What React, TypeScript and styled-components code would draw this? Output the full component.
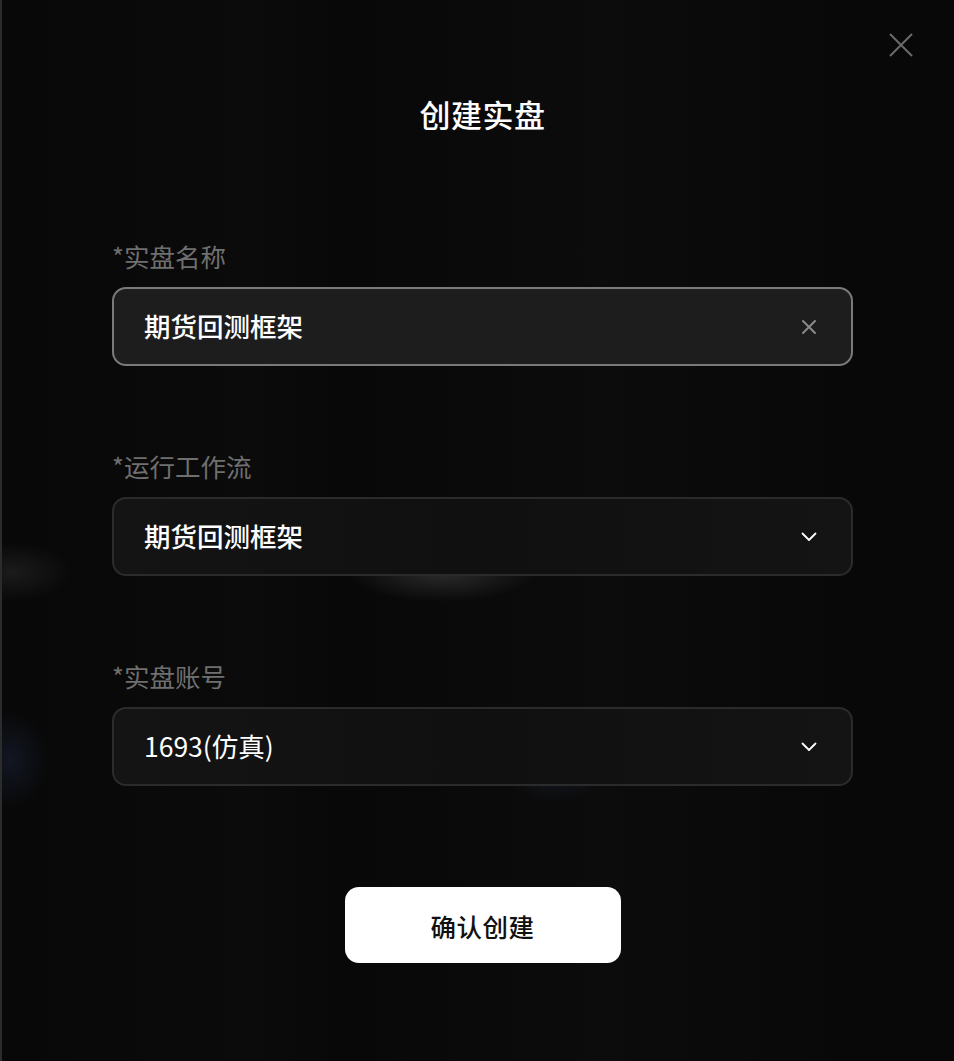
import React from "react";
import styled, { createGlobalStyle } from "styled-components";

const Global = createGlobalStyle`
  html, body { margin: 0; padding: 0; background: #080808; }
  body { font-family: "Noto Sans CJK SC", "Noto Sans", sans-serif; }
  * { box-sizing: border-box; }
`;

const Page = styled.div`
  position: relative;
  min-height: 1061px;
  width: 954px;
  overflow: hidden;
  border-left: 2px solid #2c2c2c;
  background-color: #080808;
  background-image:
    radial-gradient(ellipse 95px 30px at 440px 572px, rgba(255,255,255,0.14), rgba(255,255,255,0) 100%),
    radial-gradient(ellipse 60px 30px at 10px 572px, rgba(255,255,255,0.08), rgba(255,255,255,0) 100%),
    radial-gradient(ellipse 55px 40px at 552px 762px, rgba(70,90,150,0.22), rgba(70,90,150,0) 100%),
    radial-gradient(ellipse 40px 50px at 8px 760px, rgba(60,80,140,0.2), rgba(60,80,140,0) 100%),
    linear-gradient(90deg, rgba(255,255,255,0) 0px, rgba(255,255,255,0.012) 250px, rgba(255,255,255,0) 340px, rgba(255,255,255,0.015) 600px, rgba(255,255,255,0) 860px);
  display: flex;
  flex-direction: column;
  align-items: stretch;
  padding: 94px 101px 0 110px;
`;

const CloseButton = styled.button`
  position: absolute;
  top: 32px;
  right: 40px;
  width: 26px;
  height: 26px;
  padding: 0;
  border: none;
  background: none;
  display: flex;
  align-items: center;
  justify-content: center;
`;

const Title = styled.h1`
  margin: 0;
  height: 40px;
  line-height: 40px;
  text-align: center;
  color: #ffffff;
  font-size: 31px;
  font-weight: 500;
  letter-spacing: 0.5px;
`;

const Form = styled.div`
  margin-top: 105px;
  display: flex;
  flex-direction: column;
  gap: 83px;
`;

const Field = styled.div`
  display: flex;
  flex-direction: column;
  gap: 14px;
`;

const Label = styled.div`
  height: 34px;
  line-height: 34px;
  font-size: 25.5px;
  color: #6f6f6f;
  font-weight: 400;
`;

const Box = styled.div<{ $focused?: boolean }>`
  height: 79px;
  border-radius: 14px;
  border: 2px solid ${(p) => (p.$focused ? "#7a7a7a" : "#2b2b2b")};
  background: ${(p) =>
    p.$focused
      ? "#1d1d1e"
      : "linear-gradient(90deg, #141414 0%, #101010 50%, #141414 100%)"};
  display: flex;
  align-items: center;
  justify-content: space-between;
  padding: 0 30px 0 30px;
`;

const Value = styled.span<{ $light?: boolean }>`
  color: #ffffff;
  font-size: 26.5px;
  font-weight: ${(p) => (p.$light ? 400 : 500)};
  line-height: 1;
`;

const IconSlot = styled.span`
  display: flex;
  align-items: center;
  justify-content: center;
  width: 24px;
  height: 24px;
`;

const Actions = styled.div`
  margin-top: 101px;
  display: flex;
  justify-content: center;
  padding-left: 0;
`;

const Confirm = styled.button`
  width: 276px;
  height: 76px;
  border: none;
  border-radius: 14px;
  background: #ffffff;
  color: #111111;
  font-family: "Noto Sans CJK SC", "Noto Sans", sans-serif;
  font-size: 25.5px;
  font-weight: 500;
  letter-spacing: 0.5px;
  cursor: pointer;
`;

const Chevron = () => (
  <svg width="16" height="10" viewBox="0 0 16 10" fill="none">
    <path d="M1.5 1.5 L8 8 L14.5 1.5" stroke="#ffffff" strokeWidth="1.8" strokeLinecap="round" strokeLinejoin="round" />
  </svg>
);

const ClearX = () => (
  <svg width="16" height="16" viewBox="0 0 16 16" fill="none">
    <path d="M2 2 L14 14 M14 2 L2 14" stroke="#8a8a8a" strokeWidth="2" strokeLinecap="round" />
  </svg>
);

const CloseX = () => (
  <svg width="24" height="24" viewBox="0 0 24 24" fill="none">
    <path d="M1 1 L23 23 M23 1 L1 23" stroke="#6a6a6a" strokeWidth="2" />
  </svg>
);

export default function App() {
  return (
    <>
      <Global />
      <Page>
        <CloseButton aria-label="关闭">
          <CloseX />
        </CloseButton>
        <Title>创建实盘</Title>
        <Form>
          <Field>
            <Label>*实盘名称</Label>
            <Box $focused>
              <Value>期货回测框架</Value>
              <IconSlot>
                <ClearX />
              </IconSlot>
            </Box>
          </Field>
          <Field>
            <Label>*运行工作流</Label>
            <Box>
              <Value>期货回测框架</Value>
              <IconSlot>
                <Chevron />
              </IconSlot>
            </Box>
          </Field>
          <Field>
            <Label>*实盘账号</Label>
            <Box>
              <Value $light>1693(仿真)</Value>
              <IconSlot>
                <Chevron />
              </IconSlot>
            </Box>
          </Field>
        </Form>
        <Actions>
          <Confirm>确认创建</Confirm>
        </Actions>
      </Page>
    </>
  );
}
